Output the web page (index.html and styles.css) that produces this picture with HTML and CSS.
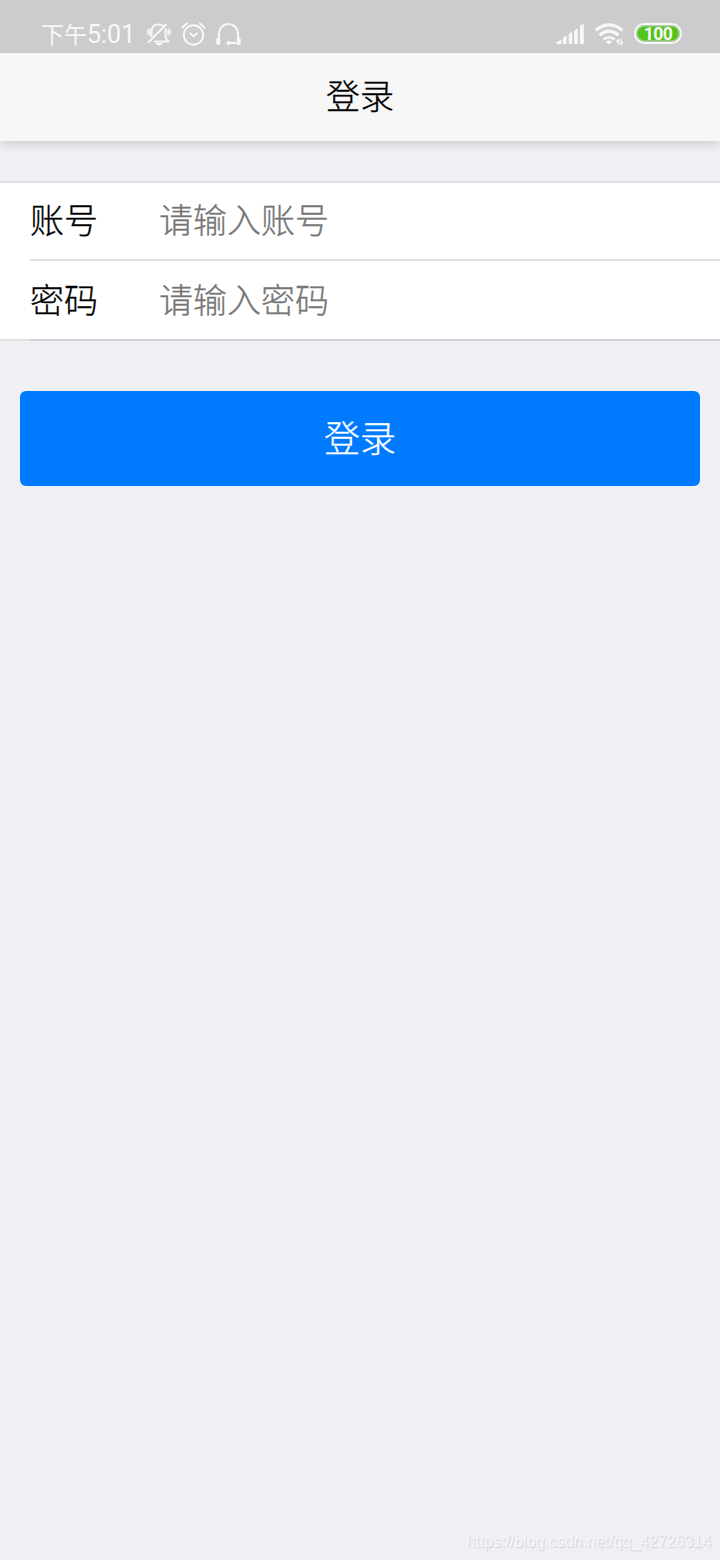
FILE: index.html
```html
<!DOCTYPE html>
<html lang="zh-CN">
<head>
<meta charset="utf-8">
<title>登录</title>
<link rel="stylesheet" href="styles.css">
</head>
<body>
<div class="status">
  <span class="time">下午<span class="clock">5:01</span></span>
  <svg class="icons-left" width="98" height="30" viewBox="145 19 98 30" fill="none" stroke="#f8f8f8" stroke-width="2" stroke-linecap="round" stroke-linejoin="round">
    <path d="M151.500 36V31.500C151.500 26.500 154.500 24.500 158.500 24.500C160.500 24.500 162 25 163.200 26M165.500 29.500V36.500Q165.500 39 168.500 41.500H155M148.800 42L166 24.500"/>
    <path d="M155 43H163Q161 45.500 159 45.500T155 43Z" fill="#f8f8f8" stroke="none"/>
    <path d="M147.800 30V34M149.800 29V35.500M170.200 30V34M168.200 29V35.500" stroke-width="1.500"/>
    <circle cx="193.500" cy="35" r="9.700"/>
    <path d="M190 33.300L193.500 36.300L197 33.300M182.500 27.500L187 23.500M204.500 27.500L200 23.500"/>
    <path d="M219 39V33.500A9.500 9.500 0 0 1 238 33.500V39M228.500 43H236"/>
    <path d="M218.300 39.500V43M238.700 39.500V43" stroke-width="4"/>
    <circle cx="228.500" cy="43" r="2" fill="#f8f8f8" stroke="none"/>
  </svg>
  <svg class="icons-right" width="70" height="30" viewBox="555 19 70 30" fill="none" stroke="#f8f8f8" stroke-width="3">
    <path d="M556.500 44V42L561.500 39.500V44ZM563 44V38Q565 36.500 566.500 35.200V44ZM568.700 44V34.500Q570.500 33 572.200 31.600V44ZM574.200 44V31Q576 29.500 577.700 28.200V44ZM579.900 44V26Q582 24 583.800 23.800V44Z" fill="#f8f8f8" stroke="none"/>
    <path d="M595.700 30.300Q609 19.500 622.300 30.300M599.500 35.300Q609 27 618.500 35.300"/>
    <path d="M603.500 39.500Q609 35 614.500 39.500" stroke-width="2.600"/>
    <path d="M605.800 41.500Q609 39.300 612.200 41.500L609 44.500Z" fill="#f8f8f8" stroke="none"/>
    <path d="M618.500 39V45M621 39V45M616.300 42.300L618.500 40M623 42L621 44.500" stroke-width="1.300"/>
  </svg>
  <span class="battery">100</span>
</div>
<header class="nav">登录</header>
<main>
  <div class="form">
    <label class="row"><span class="label">账号</span><input class="field" type="text" placeholder="请输入账号"></label>
    <label class="row"><span class="label">密码</span><input class="field" type="password" placeholder="请输入密码"></label>
  </div>
  <button class="submit" type="button">登录</button>
</main>
<footer class="mark">https://blog.csdn.net/qq_42726314</footer>
</body>
</html>
```
FILE: styles.css
```css
* { box-sizing: border-box; }
body {
  margin: 0;
  height: 1560px;
  display: flex;
  flex-direction: column;
  background: #efeff4;
  color: #000;
  font-family: "Noto Sans CJK SC", sans-serif;
  font-weight: 300;
  font-size: 34px;
  -webkit-text-stroke-width: .3px;
}
.status {
  height: 53px;
  flex: none;
  display: flex;
  padding: 19px 38px 0 41px;
  background: #ccc;
  color: #f8f8f8;
  -webkit-text-stroke-width: 0;
}
.time { width: 104px; font: 400 23px/29px "Noto Sans CJK SC", sans-serif; white-space: nowrap; }
.clock { font: 400 25px/29px Roboto, sans-serif; }
.icons-left { flex: none; }
.icons-right { margin-left: auto; flex: none; }
.battery {
  margin: 4px 0 0 9px;
  width: 48px;
  height: 21px;
  border: 2px solid #f8f8f8;
  border-radius: 11px;
  background: #52c41a;
  box-shadow: inset 0 0 0 1.5px #b5ccab;
  font: 700 17.5px/18px Roboto, sans-serif;
  letter-spacing: -.5px;
  text-align: center;
}
.nav {
  height: 88px;
  flex: none;
  background: #f7f7f7;
  box-shadow: 0 1px 12px rgba(0, 0, 0, .2);
  clip-path: inset(0 0 -20px 0);
  line-height: 84px;
  text-align: center;
}
.form {
  margin-top: 40px;
  height: 160px;
  background: linear-gradient(#e0e0e3, #e0e0e3) 0 0 / 100% 2px no-repeat, linear-gradient(#e0e0e3, #e0e0e3) 0 100% / 30px 2px no-repeat, #fff;
}
.row {
  display: flex;
  align-items: center;
  height: 80px;
  margin-left: 30px;
  padding-bottom: 2px;
  border-bottom: 2px solid #e3e3e5;
}
.row + .row { border-color: #d3d3d7; }
.label { width: 129px; line-height: 50px; }
.field {
  width: 500px;
  height: 60px;
  padding: 0 0 1px;
  border: 0;
  outline: 0;
  background: none;
  font: inherit;
}
.field::placeholder { color: #757575; opacity: 1; }
.submit {
  display: block;
  width: 680px;
  height: 95px;
  margin: 50px auto 0;
  padding: 0 0 5px;
  border: 0;
  border-radius: 6px;
  background: #007aff;
  color: #fff;
  font: inherit;
  font-size: 36px;
}
.mark {
  margin-top: auto;
  padding: 0 9px 8px 0;
  color: #f6f6f9;
  text-align: right;
  text-shadow: 1px 1px 1px #d0d0d4;
  font: 400 16px/20px "Liberation Sans", sans-serif;
  letter-spacing: -.03px;
  -webkit-text-stroke-width: 0;
}
```
